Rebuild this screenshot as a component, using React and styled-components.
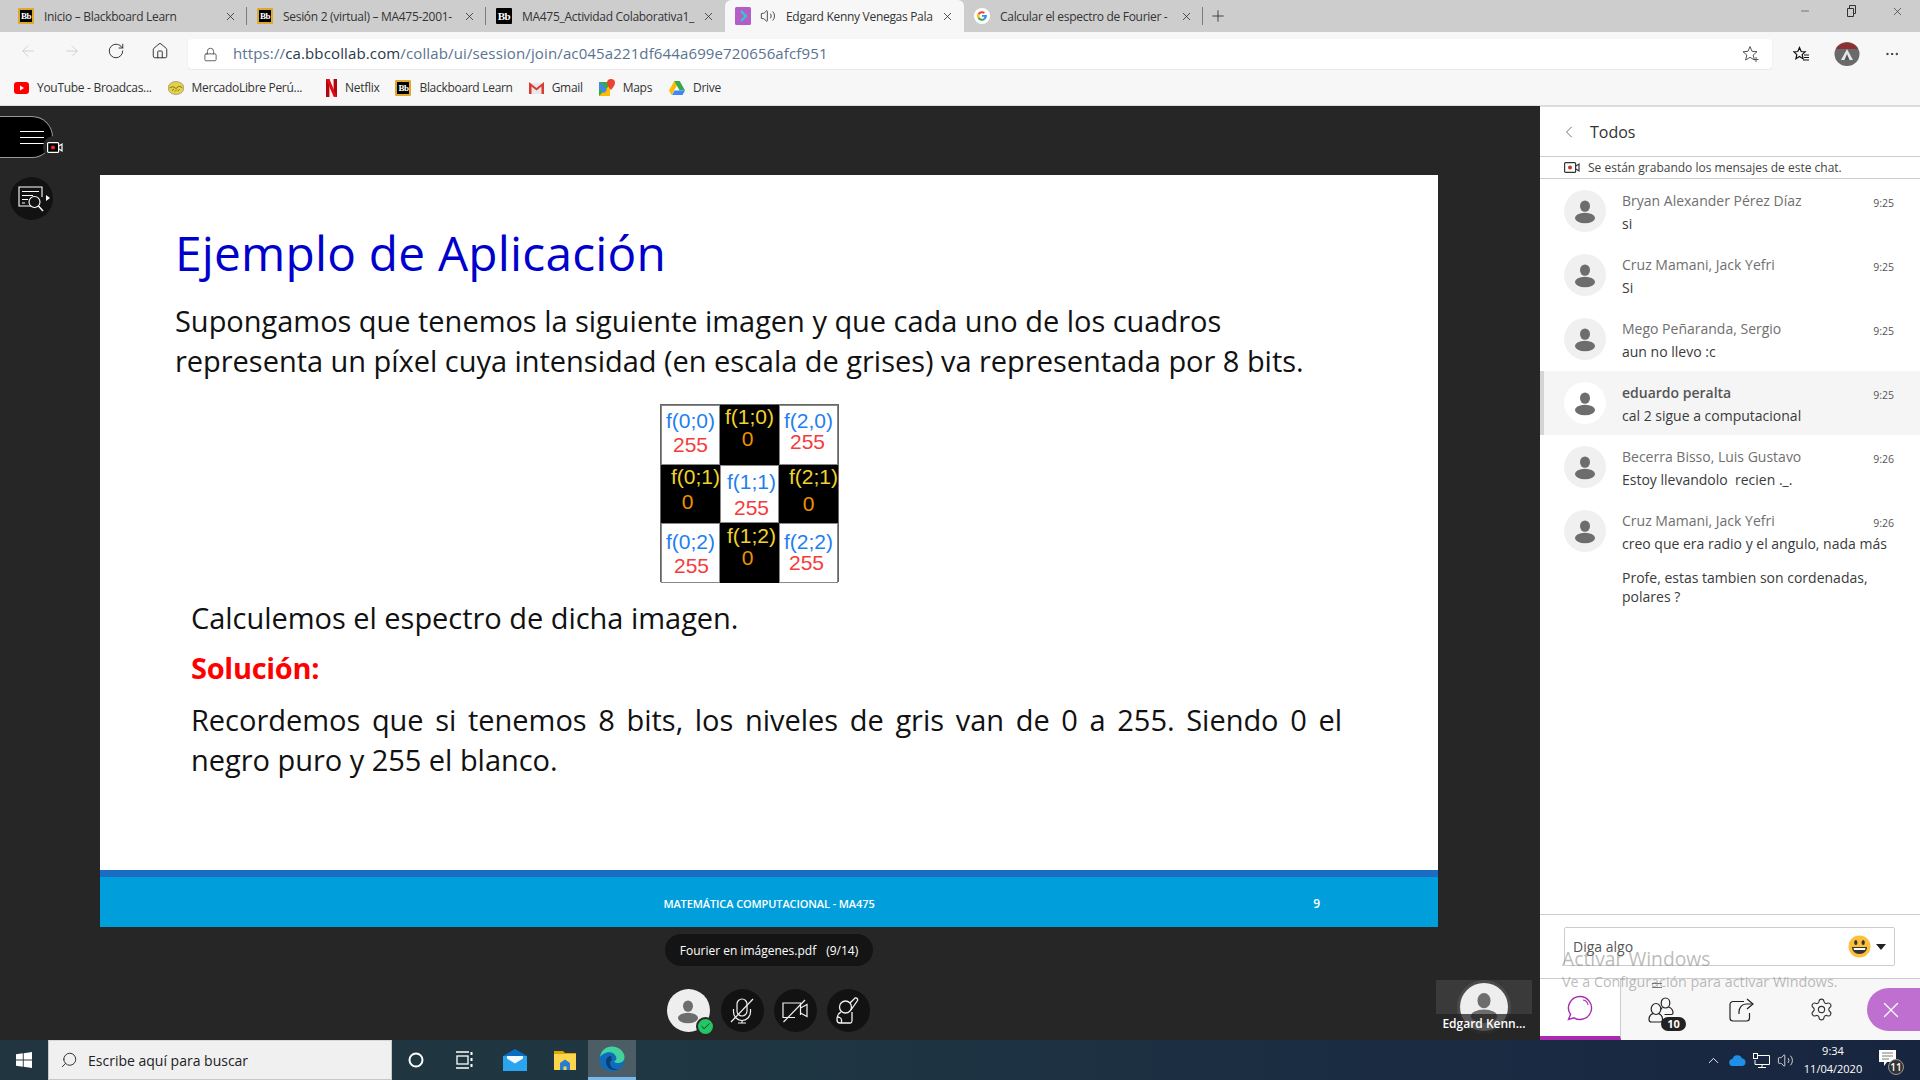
import React from 'react';
import styled, { createGlobalStyle } from 'styled-components';
import {
  ArrowLeft, ArrowRight, RotateCw, Home, Lock, Volume2, MoreHorizontal, Plus, X, Minus,
  ChevronLeft, ChevronUp, Settings, Search, Check,
} from 'lucide-react';

const Global = createGlobalStyle`
  html, body { margin: 0; padding: 0; background: #262626; }
  * { box-sizing: border-box; }
  body { font-family: "Open Sans", "Liberation Sans", sans-serif; }
`;

const Page = styled.div`
  width: 1920px;
  height: 1080px;
  display: flex;
  flex-direction: column;
  overflow: hidden;
  position: relative;
`;

/* browser chrome */
const TabBar = styled.div`
  height: 32px;
  flex: none;
  display: flex;
  align-items: stretch;
  background: #cdcdcd;
  padding: 0 8px;
`;

const Tab = styled.div`
  width: 239px;
  flex: none;
  display: flex;
  align-items: center;
  padding: 0 10px;
  font-size: 12px;
  color: #333;
  background: ${p => p.$active ? '#f7f7f7' : 'transparent'};
  border-radius: ${p => p.$active ? '6px 6px 0 0' : '0'};
  position: relative;
  &::after {
    content: '';
    display: ${p => p.$sep ? 'block' : 'none'};
    position: absolute;
    right: 0;
    top: 7px;
    height: 18px;
    width: 1px;
    background: #7c7c7c;
  }
`;

const TabTitle = styled.span`
  flex: 1;
  overflow: hidden;
  white-space: nowrap;
  margin-left: 10px;
  margin-right: 4px;
  letter-spacing: -0.3px;
`;

const AudioIcon = styled(Volume2)`
  margin-left: 9px;
  flex: none;
`;

const Favicon = styled.span`
  width: 16px;
  height: 16px;
  flex: none;
  display: inline-flex;
  align-items: center;
  justify-content: center;
  background: #000;
  color: #fff;
  border: ${p => p.$edge ? `2px solid ${p.$edge}` : 'none'};
  border-radius: 1px;
  font-family: "Liberation Serif", serif;
  font-weight: 700;
  font-size: ${p => p.$edge ? '9px' : '11px'};
  letter-spacing: -0.5px;
`;

const PlusBox = styled.div`
  width: 30px;
  display: flex;
  align-items: center;
  justify-content: center;
  color: #333;
`;

const WindowControls = styled.div`
  margin-left: auto;
  display: flex;
  align-items: flex-start;
  gap: 34px;
  padding: 5px 8px 0 0;
  color: #333;
`;

const Toolbar = styled.div`
  height: 38px;
  flex: none;
  background: #f7f7f7;
  display: flex;
  align-items: center;
`;

const NavIcons = styled.div`
  width: 188px;
  flex: none;
  display: flex;
  align-items: center;
  gap: 26px;
  padding-left: 19px;
  color: #222;
`;

const AddressBox = styled.div`
  width: 1584px;
  height: 30px;
  margin-top: 6px;
  background: #fff;
  border-radius: 4px;
  box-shadow: 0 1px 2px rgba(0, 0, 0, 0.08);
  display: flex;
  align-items: center;
  padding: 0 12px 0 15px;
  color: #444;
`;

const Url = styled.span`
  margin: -2px 0 0 15px;
  font-size: 15px;
  letter-spacing: 0.13px;
  color: #5a7390;
  flex: 1;
  & b { font-weight: 400; color: #2b3a4a; }
`;

const ToolbarRight = styled.div`
  flex: 1;
  display: flex;
  align-items: center;
  justify-content: space-between;
  padding: 6px 20px 0 21px;
  color: #222;
`;

const Bookmarks = styled.div`
  height: 36px;
  flex: none;
  background: #f7f7f7;
  display: flex;
  align-items: center;
  padding-left: 14px;
  gap: 16px;
  border-bottom: 1px solid #ddd;
`;

const Bookmark = styled.div`
  display: flex;
  align-items: center;
  gap: 8px;
  font-size: 12px;
  letter-spacing: -0.3px;
  color: #333;
  white-space: nowrap;
  margin-left: ${p => p.$push || 0}px;
`;

/* stage */
const Stage = styled.div`
  flex: 1;
  display: flex;
  min-height: 0;
`;

const Main = styled.main`
  width: 1540px;
  flex: none;
  background: #262626;
  padding: 69px 0 0 100px;
  position: relative;
`;

const SlideColumn = styled.div`
  width: 1338px;
  display: flex;
  flex-direction: column;
  align-items: center;
`;

const Slide = styled.section`
  width: 100%;
  height: 752px;
  background: #fff;
  display: flex;
  flex-direction: column;
`;

const SlideBody = styled.div`
  flex: 1;
  padding: 46px 0 0 75px;
  color: #111;
`;

const SlideTitle = styled.h1`
  margin: 0 0 17px;
  font-weight: 400;
  font-size: 47.8px;
  line-height: 63px;
  color: #0000cc;
  letter-spacing: 0.2px;
`;

const Lead = styled.p`
  margin: 0;
  font-size: 29px;
  line-height: 40px;
  letter-spacing: -0.03px;
  white-space: nowrap;
`;

const PixelGrid = styled.div`
  width: 179px;
  height: 178px;
  margin: 23px 0 0 485px;
  display: grid;
  grid-template-columns: repeat(3, 1fr);
  grid-template-rows: 60px 58px 60px;
  border: 1px solid #666;
  font-family: "Liberation Sans", sans-serif;
  font-size: 21px;
  line-height: 24px;
`;

const PixelCell = styled.div`
  background: ${p => p.$dark ? '#000' : '#fff'};
  display: flex;
  flex-direction: column;
  align-items: center;
  white-space: nowrap;
  padding-top: ${p => p.$top}px;
  box-shadow: ${p => p.$dark ? 'none' : 'inset 0 0 0 1px #888'};
`;

const CellLabel = styled.span`
  color: ${p => p.$dark ? '#f2d22e' : '#1f7ff0'};
  margin-left: ${p => p.$dx * 2}px;
`;

const CellValue = styled.span`
  color: ${p => p.$dark ? '#f09000' : '#f53c3c'};
  margin-left: ${p => p.$dx * 2}px;
  margin-top: ${p => p.$gap}px;
`;

const SolutionBlock = styled.div`
  width: 1151px;
  margin: 16px 0 0 16px;
`;

const SolutionTitle = styled(Lead)`
  margin-top: 10px;
  font-weight: 700;
  color: #f00;
  letter-spacing: -0.3px;
`;

const Justified = styled(Lead)`
  margin-top: ${p => p.$top || 0}px;
  text-align: justify;
  text-align-last: ${p => p.$last ? 'left' : 'justify'};
`;

const SlideFooter = styled.footer`
  height: 57px;
  flex: none;
  background: #009fdb;
  border-top: 7px solid #1a6dc3;
  display: grid;
  grid-template-columns: 1fr auto 1fr;
  align-items: center;
  padding-top: 2px;
  color: #fff;
  font-size: 11px;
  font-weight: 600;
  letter-spacing: -0.1px;
`;

const PageNumber = styled.span`
  justify-self: end;
  padding-right: 118px;
  font-size: 12px;
`;

const FilePill = styled.div`
  height: 32px;
  margin-top: 7px;
  padding: 0 15px;
  display: flex;
  align-items: center;
  gap: 10px;
  border-radius: 16px;
  background: #141414;
  color: #fff;
  font-size: 12px;
`;

const Controls = styled.div`
  display: flex;
  gap: 10px;
  margin: 23px 0 0 -2px;
  & > :first-child { margin-right: 1px; }
`;

const RoundButton = styled.button`
  width: 43px;
  height: 43px;
  padding: 0;
  border: 0;
  border-radius: 50%;
  background: ${p => p.$light ? '#eeeeee' : '#121212'};
  color: ${p => p.$light ? '#6d6d6d' : '#f2f2f2'};
  display: flex;
  align-items: center;
  justify-content: center;
  position: relative;
`;

const StatusDot = styled.span`
  position: absolute;
  right: -5px;
  bottom: -4px;
  width: 19px;
  height: 19px;
  border-radius: 50%;
  background: #23c565;
  border: 2px solid #262626;
  color: #10301d;
  display: flex;
  align-items: center;
  justify-content: center;
`;

const SessionMenu = styled.div`
  position: absolute;
  left: 0;
  top: 10px;
  width: 53px;
  height: 42px;
  background: #000;
  border: 1px solid #999;
  border-left: 0;
  border-radius: 0 21px 21px 0;
  display: flex;
  flex-direction: column;
  justify-content: center;
  gap: 5px;
  padding-left: 20px;
  & span { width: 24px; height: 1px; background: #fff; }
`;

const RecBadge = styled.span`
  position: absolute;
  left: 43px;
  top: 30px;
  width: 24px;
  height: 22px;
  border-radius: 12px;
  background: #262626;
  display: flex;
  align-items: center;
  justify-content: center;
`;

const RailButton = styled(RoundButton)`
  position: absolute;
  left: 10px;
  top: 71px;
`;

const RailArrow = styled.span`
  position: absolute;
  right: 3px;
  top: 18px;
  width: 0;
  height: 0;
  border-top: 3.5px solid transparent;
  border-bottom: 3.5px solid transparent;
  border-left: 4px solid #fff;
`;

const Thumb = styled.div`
  position: absolute;
  left: 1436px;
  top: 874px;
  width: 96px;
  height: 54px;
  background: #3a3a3a;
  overflow: hidden;
  display: flex;
  justify-content: center;
`;

const ThumbAvatar = styled.span`
  width: 48px;
  height: 48px;
  margin-top: 3px;
  border-radius: 50%;
  background: #eee;
  box-shadow: 0 0 0 3px #4b4b4b;
  color: #6d6d6d;
  display: flex;
  align-items: center;
  justify-content: center;
`;

const ThumbName = styled.span`
  position: absolute;
  left: 0;
  right: 0;
  bottom: 0;
  height: 20px;
  background: rgba(32, 32, 32, 0.75);
  color: #fff;
  font-size: 12px;
  font-weight: 600;
  line-height: 20px;
  text-align: center;
  white-space: nowrap;
`;

/* chat */
const ChatPanel = styled.aside`
  width: 380px;
  flex: none;
  background: #fff;
  display: flex;
  flex-direction: column;
`;

const ChatHeader = styled.div`
  height: 51px;
  flex: none;
  display: flex;
  align-items: center;
  gap: 11px;
  padding-left: 19px;
  border-top: 1px solid #ddd;
  border-bottom: 1px solid #ccc;
  font-size: 16px;
  font-weight: 500;
  color: #333;
`;

const RecordNotice = styled.div`
  height: 22px;
  flex: none;
  display: flex;
  align-items: center;
  gap: 8px;
  padding-left: 24px;
  border-bottom: 1px solid #ccc;
  font-size: 12px;
  color: #444;
`;

const MessageList = styled.div`
  flex: 1;
  min-height: 0;
`;

const Message = styled.div`
  display: flex;
  gap: 16px;
  min-height: 64px;
  padding: 11px 26px 0 ${p => p.$highlight ? '20px' : '24px'};
  background: ${p => p.$highlight ? '#f5f5f5' : '#fff'};
  border-left: ${p => p.$highlight ? '4px solid #d4d4d4' : '0'};
`;

const Avatar = styled.span`
  width: 42px;
  height: 42px;
  flex: none;
  border-radius: 50%;
  background: ${p => p.$highlight ? '#fff' : '#f0f0f0'};
  color: #6d6d6d;
  display: flex;
  align-items: center;
  justify-content: center;
`;

const MessageBody = styled.div`
  flex: 1;
  min-width: 0;
`;

const MessageHead = styled.div`
  display: flex;
  justify-content: space-between;
  align-items: center;
  height: 23px;
  margin: -1px 0 2px;
`;

const Author = styled.span`
  font-size: 14px;
  color: ${p => p.$strong ? '#555' : '#6f6f6f'};
  font-weight: ${p => p.$strong ? 600 : 400};
`;

const Time = styled.span`
  font-size: 10.5px;
  color: #555;
  margin-top: 4px;
`;

const MessageText = styled.p`
  margin: ${p => p.$spaced ? '15px' : '0'} 0 0;
  font-size: 14px;
  line-height: 19px;
  color: #3a3a3a;
  white-space: pre-wrap;
  max-width: 270px;
`;

const Composer = styled.div`
  height: 65px;
  flex: none;
  border-top: 1px solid #ccc;
  border-bottom: 1px solid #ccc;
  padding: 12px 25px 0 24px;
`;

const ComposerInput = styled.div`
  height: 39px;
  border: 1px solid #ccc;
  border-radius: 2px;
  display: flex;
  align-items: center;
  justify-content: space-between;
  padding: 0 8px;
  font-size: 14px;
  color: #555;
`;

const EmojiWrap = styled.span`
  display: flex;
  align-items: center;
  gap: 5px;
`;

const Caret = styled.span`
  width: 0;
  height: 0;
  border-left: 5px solid transparent;
  border-right: 5px solid transparent;
  border-top: 6px solid #222;
`;

const PanelTabs = styled.div`
  height: 61px;
  flex: none;
  display: flex;
  align-items: stretch;
  position: relative;
`;

const ChatTab = styled.div`
  width: 81px;
  flex: none;
  display: flex;
  align-items: center;
  justify-content: center;
  color: #a82bb0;
  border-bottom: 4px solid #a82bb0;
  border-right: 1px solid #ccc;
`;

const PanelTab = styled.div`
  width: 80px;
  flex: none;
  display: flex;
  align-items: center;
  justify-content: center;
  color: #333;
  position: relative;
  background: #f7f7f7;
`;

const DragHandle = styled.span`
  position: absolute;
  top: 4px;
  left: 31px;
  width: 10px;
  height: 5px;
  border-top: 1px solid #777;
  border-bottom: 1px solid #777;
`;

const TabsFill = styled.div`
  flex: 1;
  background: #f7f7f7;
  display: flex;
  align-items: center;
  justify-content: flex-end;
`;

const CountBadge = styled.span`
  position: absolute;
  left: 40px;
  bottom: 9px;
  width: 25px;
  height: 14px;
  border-radius: 7px;
  background: #222;
  color: #fff;
  font-size: 11px;
  font-weight: 700;
  line-height: 14px;
  text-align: center;
`;

const CloseButton = styled.div`
  width: 53px;
  height: 43px;
  padding-right: 6px;
  border-radius: 22px 0 0 22px;
  background: #be6fd0;
  color: #fff;
  display: flex;
  align-items: center;
  justify-content: center;
`;

const Watermark = styled.div`
  position: absolute;
  left: 1562px;
  top: 945px;
  color: rgba(120, 120, 120, 0.5);
  font-size: 14.3px;
  line-height: 20px;
  pointer-events: none;
  & strong { display: block; font-weight: 400; font-size: 19.3px; line-height: 27px; }
`;

/* taskbar */
const Taskbar = styled.footer`
  height: 40px;
  flex: none;
  display: flex;
  align-items: center;
  background: linear-gradient(90deg, #20353f 0%, #1f3742 35%, #1a2b42 75%, #18253f 100%);
  color: #fff;
`;

const StartButton = styled.div`
  width: 48px;
  display: flex;
  justify-content: center;
`;

const SearchBox = styled.div`
  width: 344px;
  height: 40px;
  background: #f0f0f0;
  border: 1px solid #c8c8c8;
  border-top-color: #d8d8d8;
  display: flex;
  align-items: center;
  gap: 10px;
  padding-left: 11px;
  color: #222;
  font-size: 14px;
`;

const SearchGlass = styled(Search)`
  transform: scaleX(-1);
`;

const TaskIcon = styled.div`
  width: ${p => p.$width || 48}px;
  height: 40px;
  flex: none;
  display: flex;
  align-items: center;
  justify-content: center;
  background: ${p => p.$active ? '#4c5d66' : 'transparent'};
  border-bottom: ${p => p.$active ? '3px solid #76b9ed' : '0'};
`;

const Tray = styled.div`
  margin-left: auto;
  display: flex;
  align-items: center;
  gap: 7px;
  padding-right: 19px;
`;

const Clock = styled.div`
  width: 62px;
  margin: 0 2px 0 1px;
  text-align: center;
  font-size: 11px;
  line-height: 18px;
  white-space: nowrap;
`;

const Notice = styled.div`
  width: 28px;
  height: 30px;
  padding: 4px 0 0 6px;
  position: relative;
`;

const NoticeCount = styled.span`
  position: absolute;
  right: -3px;
  bottom: 0;
  width: 16px;
  height: 16px;
  border-radius: 50%;
  background: #333;
  border: 1px solid #999;
  font-size: 10px;
  line-height: 14px;
  font-weight: 600;
  text-align: center;
`;

const PersonIcon = ({ size = 26 }) => (
  <svg width={size} height={size} viewBox="0 0 24 24" fill="currentColor">
    <ellipse cx="12" cy="7.5" rx="4.6" ry="5.3" />
    <ellipse cx="12" cy="18.5" rx="9.3" ry="4.8" />
  </svg>
);

const BbIcon = ({ edge }) => <Favicon $edge={edge}>Bb</Favicon>;

const GoogleIcon = () => (
  <svg width="16" height="16" viewBox="0 0 48 48">
    <circle cx="24" cy="24" r="24" fill="#fff" />
    <path fill="#ea4335" d="M24 10c3.5 0 6.6 1.3 9 3.4l-4 4a8 8 0 0 0-12.4 3L11 16.5A15 15 0 0 1 24 10z" />
    <path fill="#fbbc05" d="M11 16.5l5.6 4a8 8 0 0 0 0 7L11 31.5a15 15 0 0 1 0-15z" />
    <path fill="#34a853" d="M11 31.5l5.6-4a8 8 0 0 0 12 3.2l5 4A15 15 0 0 1 11 31.5z" />
    <path fill="#4285f4" d="M38.5 21c.7 5-1 10.3-4.9 13.7l-5-4c1.5-1 2.5-2.5 3-4.2H24V21z" />
  </svg>
);

const CollabIcon = () => (
  <svg width="16" height="18" viewBox="0 0 16 18">
    <rect width="16" height="18" rx="1.5" fill="#b45cc8" />
    <path d="M6 4l5 5-5 5" fill="none" stroke="#2ad0c8" strokeWidth="2.2" />
  </svg>
);

const YoutubeIcon = () => (
  <svg width="15" height="12" viewBox="0 0 15 12">
    <rect width="15" height="12" rx="3" fill="#f00" />
    <path d="M6 3.5l4 2.5-4 2.5z" fill="#fff" />
  </svg>
);

const MercadoIcon = () => (
  <svg width="16" height="14" viewBox="0 0 16 14">
    <ellipse cx="8" cy="7" rx="8" ry="6.5" fill="#e8d23c" stroke="#8a8a8a" strokeWidth="0.7" />
    <path d="M1.5 7c2-1 3-1.5 4-1l2.5 1.5L10.5 5.5c1-.3 2 0 4 1.5M4 9.5l2-1.500M7 10.500l2-2M10 10l1.500-1.500" stroke="#555" strokeWidth="0.8" fill="none" />
  </svg>
);

const NetflixIcon = () => (
  <svg width="11" height="18" viewBox="0 0 11 18">
    <path fill="#b1060f" d="M0 0h3.4v18L0 18z" />
    <path fill="#b1060f" d="M7.6 0H11v18l-3.4-.4z" />
    <path fill="#e50914" d="M0 0h3.4L11 18l-3.4-.4z" />
  </svg>
);

const GmailIcon = () => (
  <svg width="15" height="12" viewBox="0 0 15 12">
    <path fill="#e8e8e8" d="M0 1h15v11H0z" />
    <path fill="#d93b30" d="M0 0l7.5 6L15 0v12h-2.5V4.5L7.5 8.5l-5-4V12H0z" />
  </svg>
);

const MapsIcon = () => (
  <svg width="16" height="17" viewBox="0 0 16 17">
    <path fill="#34a853" d="M0 3h11v14H0z" />
    <path fill="#fbbc05" d="M0 17L11 6v11z" />
    <path fill="#4285f4" d="M0 3l8 8-3 3-5-5z" />
    <path fill="#ea4335" d="M12 0a4 4 0 0 1 4 4c0 2.5-4 7-4 7S8 6.5 8 4a4 4 0 0 1 4-4z" />
  </svg>
);

const DriveIcon = () => (
  <svg width="16" height="14" viewBox="0 0 16 14">
    <path fill="#fbbc05" d="M5.3 0h5.4L5 9.5 2.500 14 0 9.5z" />
    <path fill="#34a853" d="M5.3 0h5.4L16 9.500h-5.400z" />
    <path fill="#4285f4" d="M3 14l2.500-4.500H16L13.500 14z" />
  </svg>
);

const FavoritesIcon = () => (
  <svg width="17" height="17" viewBox="0 0 17 17" fill="none" stroke="#111" strokeWidth="1.2">
    <path d="M6.5 1.5l1.7 4 4 .3-3 2.800.9 4.200-3.600-2.300L2.900 12.800l.9-4.200-3-2.800 4-.3z" />
    <path d="M11 9h5M11 11.500h5M10 14h6" />
  </svg>
);

const StarPlusIcon = () => (
  <svg width="18" height="18" viewBox="0 0 18 18" fill="none" stroke="#555" strokeWidth="1">
    <path d="M8 1.5l2 4.800 5 .4-3.800 3.300 1.200 5-4.400-2.700L3.600 15l1.200-5L1 6.700l5-.4z" />
    <path d="M14 12v5M11.500 14.500h5" />
  </svg>
);

const ProfileIcon = () => (
  <svg width="26" height="24" viewBox="0 0 26 24">
    <ellipse cx="13" cy="12" rx="12.500" ry="12" fill="#6a6a6a" />
    <path d="M2 7a12.500 12 0 0 1 22 0z" fill="#8e3030" />
    <path d="M13 7l6 11H7z" fill="#e6e6e6" />
    <path d="M13 12l2.500 6h-5z" fill="#555" />
  </svg>
);

const RecordIcon = ({ dark }) => (
  <svg width="16" height="11" viewBox="0 0 16 11">
    <rect x="0.6" y="0.6" width="11" height="9.8" rx="1" fill={dark ? '#000' : '#fff'} stroke={dark ? '#fff' : '#333'} strokeWidth="1.2" />
    <circle cx="6" cy="5.5" r="2" fill={dark ? '#f0282d' : '#c0392b'} />
    <path d="M12 4l3-2v7l-3-2" fill="none" stroke={dark ? '#fff' : '#333'} strokeWidth="1.2" />
  </svg>
);

const SlideSearchIcon = () => (
  <svg width="28" height="26" viewBox="0 0 28 26" fill="none" stroke="#fff" strokeWidth="1.1">
    <path d="M13 20H1V1h23v10" />
    <path d="M4 5.5h17M4 9.500h11M4 13.500h6M4 17h3" />
    <circle cx="16.5" cy="16" r="5.5" />
    <path d="M20.5 20l4.500 5" strokeWidth="1.5" />
  </svg>
);

const MicMutedIcon = () => (
  <svg width="24" height="26" viewBox="0 0 24 26" fill="none" stroke="#f2f2f2" strokeWidth="1.2">
    <rect x="7" y="1" width="10" height="17" rx="5" />
    <path d="M3.500 11v3a8.500 8.500 0 0 0 17 0v-3" />
    <path d="M12 22.500V25M8 25h8" />
    <path d="M1 24L23 1" />
  </svg>
);

const CameraMutedIcon = () => (
  <svg width="26" height="24" viewBox="0 0 26 24" fill="none" stroke="#f2f2f2" strokeWidth="1.2">
    <path d="M13 18.500H1V4h17.500v12" />
    <path d="M18.500 9l6.500-3.500v12L18.500 14" />
    <path d="M1.500 23L23 1" />
  </svg>
);

const HandIcon = () => (
  <svg width="28" height="28" viewBox="0 0 28 28" fill="none" stroke="#f2f2f2" strokeWidth="1.3">
    <circle cx="11.5" cy="10" r="6" />
    <path d="M16 6l5-5c2-.5 3 1 2.500 2.500L17 13" />
    <path d="M7 15c-3 1.500-4 5-4 8 0 2 1 3 3 3h10c2 0 2-1 2-3v-8" />
    <path d="M3.5 20c1.500 0 4 1 4 3v3" />
  </svg>
);

const ChatBubbleIcon = () => (
  <svg width="26" height="26" viewBox="0 0 26 26" fill="none" stroke="currentColor" strokeWidth="1.4">
    <path d="M13 1.5a11.500 11.500 0 1 1-6 21.300L1.500 24.500l2-5A11.500 11.500 0 0 1 13 1.500z" />
    <path d="M16 5a6 6 0 0 1 5 5" strokeWidth="1.1" />
  </svg>
);

const PeopleIcon = () => (
  <svg width="26" height="26" viewBox="0 0 26 26" fill="none" stroke="#222" strokeWidth="1.2">
    <ellipse cx="8" cy="12" rx="4.8" ry="5.5" />
    <path d="M5 16.5c-3 1-4 3.500-4 6 0 1.500 1 2.500 2.500 2.500h9c1.500 0 2-1 2-2.500 0-2.500-1-5-4-6" />
    <ellipse cx="17.5" cy="6" rx="4.3" ry="5" />
    <path d="M14.5 10.500c-1 .5-1.500 1-1.500 2M20.500 10c3 1 4.500 3 4.500 6 0 1-.5 1.500-1.500 1.500h-7" />
  </svg>
);

const ShareIcon = () => (
  <svg width="25" height="24" viewBox="0 0 25 24" fill="none" stroke="#222" strokeWidth="1.2">
    <path d="M15 3.500H4a3 3 0 0 0-3 3V20a3 3 0 0 0 3 3h13.500a3 3 0 0 0 3-3v-5" />
    <path d="M18 1l6 5-6 5" />
    <path d="M24 6h-7c-4 0-7 3.500-7 8v2" />
  </svg>
);

const EmojiIcon = () => (
  <svg width="23" height="23" viewBox="0 0 23 23">
    <circle cx="11.5" cy="11.5" r="11" fill="#fcbf3a" />
    <ellipse cx="7.8" cy="7.5" rx="1.6" ry="2.5" fill="#333" />
    <ellipse cx="15.2" cy="7.5" rx="1.6" ry="2.5" fill="#333" />
    <path d="M4 12h15c0 4-3 7-7.500 7S4 16 4 12z" fill="#333" />
    <path d="M5.500 13h12l-.5 2H6z" fill="#fff" />
  </svg>
);

const WindowsLogo = () => (
  <svg width="16" height="16" viewBox="0 0 16 16" fill="#fff">
    <path d="M0 2.300L6.800 1.300V7.500H0zM7.700 1.200L16 0v7.500H7.700zM0 8.400h6.800v6.300L0 13.700zM7.700 8.400H16V16l-8.300-1.200z" />
  </svg>
);

const TaskViewIcon = () => (
  <svg width="17" height="18" viewBox="0 0 17 18" fill="none" stroke="#fff" strokeWidth="1.3">
    <path d="M0 1h13M0 17h13" />
    <rect x="1" y="5" width="11" height="8" />
    <path d="M15.500 1v3M15.500 7v3M15.500 13v3" strokeWidth="2" />
  </svg>
);

const MailIcon = () => (
  <svg width="24" height="22" viewBox="0 0 24 22">
    <path fill="#0a6cc4" d="M12 0l12 7v3H0V7z" />
    <rect y="7" width="24" height="15" fill="#2aa4ee" />
    <path fill="#f2f8ff" d="M4 7h16v2.500l-8 5-8-5z" />
  </svg>
);

const FolderIcon = () => (
  <svg width="22" height="19" viewBox="0 0 22 19">
    <path fill="#e2a400" d="M0 0h9l2 2h11v4H0z" />
    <rect y="3" width="22" height="16" fill="#fbd54b" />
    <path fill="#2b7cd3" d="M6 12l5-3.500 5 3.500v7h-3.500v-3.500h-3V19H6z" />
  </svg>
);

const EdgeIcon = () => (
  <svg width="26" height="26" viewBox="0 0 26 26">
    <circle cx="13" cy="13" r="12.5" fill="#0f6cbd" />
    <path fill="#43d19e" d="M1 11C2 4.500 7 .5 13 .5c7 0 12.500 5 12.500 11 0 3-2.500 5.500-6 5.500-2 0-3.500-.5-4.500-1.500 2.500-1 3-3 2-5C15.500 7 12 5.500 8 6.500 5 7.200 2.500 9 1 11z" />
    <path fill="#0b3f73" d="M12 10c-3 0-5 2.500-5 6 0 4.500 3.500 8 9 8 1.500 0 3-.5 4-1-6 1-9-2.500-9-6 0-1.500.8-2.500 2-3-.5-1.500-.5-3-1-4z" />
  </svg>
);

const CloudIcon = () => (
  <svg width="17" height="11" viewBox="0 0 17 11">
    <path fill="#1e90e8" d="M4 11a3.500 3.500 0 0 1-.5-7A5 5 0 0 1 13 3.500 3.800 3.800 0 0 1 13.500 11z" />
  </svg>
);

const NetworkIcon = () => (
  <svg width="17" height="15" viewBox="0 0 17 15" fill="none" stroke="#fff" strokeWidth="1">
    <path d="M4 2.500h12.500v9H2V7" />
    <rect x="0.5" y="0.5" width="4" height="5" />
    <path d="M9 11.500v3M5 14.500h8" />
  </svg>
);

const NoticeGlyph = () => (
  <svg width="17" height="16" viewBox="0 0 17 16" fill="#fff">
    <path d="M0 0h17v12H8l-3 4v-4H0z" />
    <path d="M3 3h11M3 6h11M3 9h7" stroke="#555" strokeWidth="0.8" />
  </svg>
);

const tabs = [
  { title: 'Inicio – Blackboard Learn', icon: <BbIcon edge="#e0a92e" />, sep: true },
  { title: 'Sesión 2 (virtual) – MA475-2001-', icon: <BbIcon edge="#e0a92e" />, sep: true },
  { title: 'MA475_Actividad Colaborativa1_', icon: <BbIcon />, sep: false },
  { title: 'Edgard Kenny Venegas Pala', icon: <CollabIcon />, active: true, audio: true, sep: false },
  { title: 'Calcular el espectro de Fourier -', icon: <GoogleIcon />, sep: true },
];

const bookmarks = [
  { label: 'YouTube - Broadcas...', icon: <YoutubeIcon /> },
  { label: 'MercadoLibre Perú...', icon: <MercadoIcon /> },
  { label: 'Netflix', icon: <NetflixIcon />, push: 8 },
  { label: 'Blackboard Learn', icon: <BbIcon edge="#e0a92e" /> },
  { label: 'Gmail', icon: <GmailIcon /> },
  { label: 'Maps', icon: <MapsIcon /> },
  { label: 'Drive', icon: <DriveIcon />, push: 1 },
];

const cells = [
  { label: 'f(0;0)', value: '255', top: 4, gap: 0, lx: 0, vx: 0 },
  { label: 'f(1;0)', value: '0', top: 0, gap: -2, lx: 0, vx: -2, dark: true },
  { label: 'f(2,0)', value: '255', top: 4, gap: -3, lx: 0, vx: -1 },
  { label: 'f(0;1)', value: '0', top: 0, gap: 1, lx: 5, vx: -3, dark: true },
  { label: 'f(1;1)', value: '255', top: 5, gap: 2, lx: 2, vx: 2 },
  { label: 'f(2;1)', value: '0', top: 0, gap: 3, lx: 5, vx: 0, dark: true },
  { label: 'f(0;2)', value: '255', top: 7, gap: 0, lx: 0, vx: 1 },
  { label: 'f(1;2)', value: '0', top: 1, gap: -2, lx: 2, vx: -2, dark: true },
  { label: 'f(2;2)', value: '255', top: 7, gap: -3, lx: 0, vx: -2 },
];

const messages = [
  { author: 'Bryan Alexander Pérez Díaz', time: '9:25', lines: ['si'] },
  { author: 'Cruz Mamani, Jack Yefri', time: '9:25', lines: ['Si'] },
  { author: 'Mego Peñaranda, Sergio', time: '9:25', lines: ['aun no llevo :c'] },
  { author: 'eduardo peralta', time: '9:25', lines: ['cal 2 sigue a computacional'], highlight: true },
  { author: 'Becerra Bisso, Luis Gustavo', time: '9:26', lines: ['Estoy llevandolo  recien ._.'] },
  { author: 'Cruz Mamani, Jack Yefri', time: '9:26', lines: ['creo que era radio y el angulo, nada más', 'Profe, estas tambien son cordenadas, polares ?'] },
];

export default function App() {
  return (
    <Page>
      <Global />
      <TabBar>
        {tabs.map(tab => (
          <Tab key={tab.title} $active={tab.active} $sep={tab.sep}>
            {tab.icon}
            {tab.audio && <AudioIcon size={16} strokeWidth={1.3} />}
            <TabTitle>{tab.title}</TabTitle>
            <X size={13} strokeWidth={1.5} />
          </Tab>
        ))}
        <PlusBox><Plus size={18} strokeWidth={1.2} /></PlusBox>
        <WindowControls>
          <Minus size={12} strokeWidth={1.2} />
          <svg width="12" height="12" viewBox="0 0 12 12" fill="none" stroke="#333">
            <path d="M2.500 3.500h6v8h-6zM4.500 3.500V.5h6v8h-2" />
          </svg>
          <X size={13} strokeWidth={1.3} />
        </WindowControls>
      </TabBar>

      <Toolbar>
        <NavIcons>
          <ArrowLeft size={18} strokeWidth={1} color="#c4c4c4" />
          <ArrowRight size={18} strokeWidth={1} color="#c4c4c4" />
          <RotateCw size={18} strokeWidth={1.2} />
          <Home size={18} strokeWidth={1.2} />
        </NavIcons>
        <AddressBox>
          <Lock size={15} strokeWidth={1.3} />
          <Url>https://<b>ca.bbcollab.com</b>/collab/ui/session/join/ac045a221df644a699e720656afcf951</Url>
          <StarPlusIcon />
        </AddressBox>
        <ToolbarRight>
          <FavoritesIcon />
          <ProfileIcon />
          <MoreHorizontal size={16} strokeWidth={1.5} />
        </ToolbarRight>
      </Toolbar>

      <Bookmarks>
        {bookmarks.map(item => (
          <Bookmark key={item.label} $push={item.push}>{item.icon}{item.label}</Bookmark>
        ))}
      </Bookmarks>

      <Stage>
        <Main>
          <SlideColumn>
            <Slide>
              <SlideBody>
                <SlideTitle>Ejemplo de Aplicación</SlideTitle>
                <Lead>Supongamos que tenemos la siguiente imagen y que cada uno de los cuadros</Lead>
                <Lead>representa un píxel cuya intensidad (en escala de grises) va representada por 8 bits.</Lead>
                <PixelGrid>
                  {cells.map(cell => (
                    <PixelCell key={cell.label} $dark={cell.dark} $top={cell.top}>
                      <CellLabel $dark={cell.dark} $dx={cell.lx}>{cell.label}</CellLabel>
                      <CellValue $dark={cell.dark} $dx={cell.vx} $gap={cell.gap}>{cell.value}</CellValue>
                    </PixelCell>
                  ))}
                </PixelGrid>
                <SolutionBlock>
                  <Lead>Calculemos el espectro de dicha imagen.</Lead>
                  <SolutionTitle>Solución:</SolutionTitle>
                  <Justified $top={12}>Recordemos que si tenemos 8 bits, los niveles de gris van de 0 a 255. Siendo 0 el</Justified>
                  <Justified $last>negro puro y 255 el blanco.</Justified>
                </SolutionBlock>
              </SlideBody>
              <SlideFooter>
                <span />
                <span>MATEMÁTICA COMPUTACIONAL - MA475</span>
                <PageNumber>9</PageNumber>
              </SlideFooter>
            </Slide>
            <FilePill><span>Fourier en imágenes.pdf</span><span>(9/14)</span></FilePill>
            <Controls>
              <RoundButton $light>
                <PersonIcon />
                <StatusDot><Check size={11} strokeWidth={2} /></StatusDot>
              </RoundButton>
              <RoundButton><MicMutedIcon /></RoundButton>
              <RoundButton><CameraMutedIcon /></RoundButton>
              <RoundButton><HandIcon /></RoundButton>
            </Controls>
          </SlideColumn>

          <SessionMenu><span /><span /><span /></SessionMenu>
          <RecBadge><RecordIcon dark /></RecBadge>
          <RailButton><SlideSearchIcon /><RailArrow /></RailButton>
          <Thumb>
            <ThumbAvatar><PersonIcon size={34} /></ThumbAvatar>
            <ThumbName>Edgard Kenn...</ThumbName>
          </Thumb>
        </Main>

        <ChatPanel>
          <ChatHeader>
            <ChevronLeft size={20} strokeWidth={1} color="#555" />
            Todos
          </ChatHeader>
          <RecordNotice><RecordIcon />Se están grabando los mensajes de este chat.</RecordNotice>
          <MessageList>
            {messages.map((msg, i) => (
              <Message key={i} $highlight={msg.highlight}>
                <Avatar $highlight={msg.highlight}><PersonIcon /></Avatar>
                <MessageBody>
                  <MessageHead>
                    <Author $strong={msg.highlight}>{msg.author}</Author>
                    <Time>{msg.time}</Time>
                  </MessageHead>
                  {msg.lines.map((line, j) => (
                    <MessageText key={j} $spaced={j > 0}>{line}</MessageText>
                  ))}
                </MessageBody>
              </Message>
            ))}
          </MessageList>
          <Composer>
            <ComposerInput>
              Diga algo
              <EmojiWrap><EmojiIcon /><Caret /></EmojiWrap>
            </ComposerInput>
          </Composer>
          <PanelTabs>
            <ChatTab><ChatBubbleIcon /></ChatTab>
            <PanelTab><DragHandle /><PeopleIcon /><CountBadge>10</CountBadge></PanelTab>
            <PanelTab><ShareIcon /></PanelTab>
            <PanelTab><Settings size={25} strokeWidth={1.1} /></PanelTab>
            <TabsFill><CloseButton><X size={26} strokeWidth={1.2} /></CloseButton></TabsFill>
          </PanelTabs>
        </ChatPanel>
      </Stage>

      <Taskbar>
        <StartButton><WindowsLogo /></StartButton>
        <SearchBox>
          <SearchGlass size={18} strokeWidth={1.2} />
          Escribe aquí para buscar
        </SearchBox>
        <TaskIcon>
          <svg width="16" height="16" viewBox="0 0 16 16" fill="none" stroke="#fff" strokeWidth="2"><circle cx="8" cy="8" r="6.5" /></svg>
        </TaskIcon>
        <TaskIcon><TaskViewIcon /></TaskIcon>
        <TaskIcon $width={54}><MailIcon /></TaskIcon>
        <TaskIcon $width={46}><FolderIcon /></TaskIcon>
        <TaskIcon $active><EdgeIcon /></TaskIcon>
        <Tray>
          <ChevronUp size={17} strokeWidth={1.3} />
          <CloudIcon />
          <NetworkIcon />
          <Volume2 size={17} strokeWidth={1.1} />
          <Clock>9:34<br />11/04/2020</Clock>
          <Notice>
            <NoticeGlyph />
            <NoticeCount>11</NoticeCount>
          </Notice>
        </Tray>
      </Taskbar>

      <Watermark>
        <strong>Activar Windows</strong>
        Ve a Configuración para activar Windows.
      </Watermark>
    </Page>
  );
}
